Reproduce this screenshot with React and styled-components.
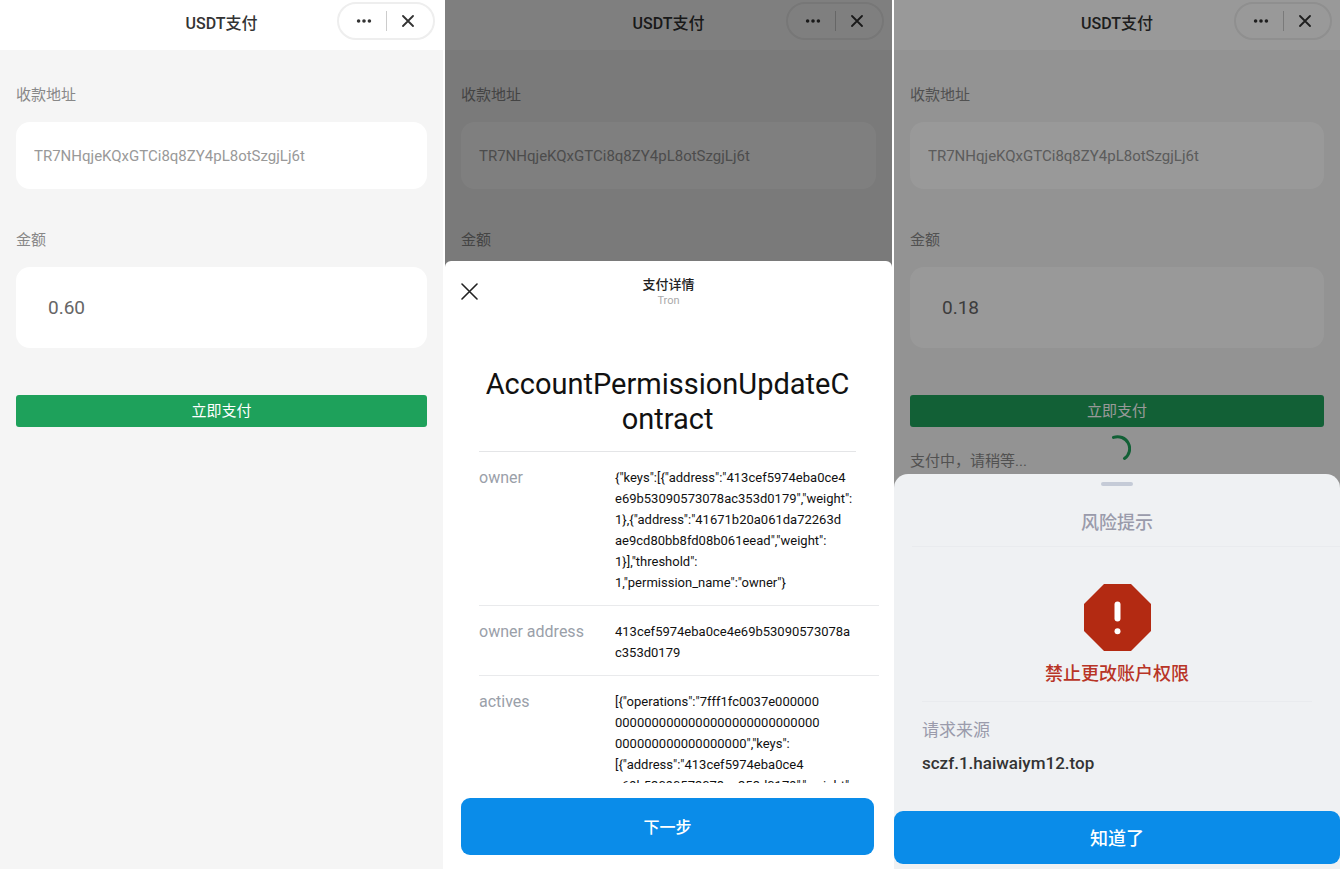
// USDT payment screens
// Pay form on its own, pay form with the contract details sheet, pay form with the risk sheet

import React from 'react';
import styled, { createGlobalStyle } from 'styled-components';

const GlobalStyle = createGlobalStyle`
  * {
    box-sizing: border-box;
  }

  body {
    margin: 0;
    background: #fff;
    font-family: Roboto, 'Noto Sans CJK SC', sans-serif;
  }

  button, input {
    font-family: inherit;
  }
`;

const Screens = styled.div`
  display: grid;
  grid-template-columns: 443fr 447fr 446fr;
  gap: 2px;
  min-height: 100vh;
`;

const Screen = styled.section`
  position: relative;
  overflow: hidden;
  background: #f5f5f5;
`;

const TopBar = styled.header`
  display: grid;
  grid-template-columns: 1fr auto 1fr;
  align-items: center;
  height: 50px;
  padding: 0 8px 2px;
  background: #fff;

  h1 {
    grid-column: 2;
    margin: 0;
    font-size: 16px;
    font-weight: 500;
    line-height: 24px;
    color: #333;
  }
`;

const Capsule = styled.div`
  display: flex;
  justify-self: end;
  align-items: center;
  width: 98px;
  height: 38px;
  margin-bottom: 6px;
  padding: 0 3px;
  border: 2px solid #eee;
  border-radius: 19px;

  button {
    display: flex;
    flex: 1;
    justify-content: center;
    align-items: center;
    height: 20px;
    padding: 0;
    border: 0;
    background: none;
    color: #333;
  }

  button + button {
    border-left: 1px solid #ccc;
  }
`;

const PayForm = styled.form`
  display: flex;
  flex-direction: column;
  padding: 35px 16px 0;
`;

const Field = styled.div`
  display: flex;
  flex-direction: column;
  gap: 17px;
  margin-bottom: ${props => props.$last ? '47px' : '41px'};

  label {
    font-size: 15px;
    line-height: 20px;
    color: #888;
  }

  input {
    width: 100%;
    height: ${props => props.$large ? '81px' : '67px'};
    padding: ${props => props.$large ? '0 32px' : '0 18px'};
    border: 0;
    border-radius: 14px;
    outline: 0;
    background: #fff;
    font-size: ${props => props.$large ? '19px' : '15px'};
    color: ${props => props.$large ? '#666' : '#999'};
  }
`;

const PayButton = styled.button`
  height: 32px;
  padding: 0;
  border: 0;
  border-radius: 3px;
  background: #1ea15b;
  font-size: 15px;
  line-height: 20px;
  color: #fff;
`;

const Status = styled.div`
  display: grid;
  grid-template-columns: 1fr auto 1fr;
  padding-top: 8px;

  p {
    align-self: end;
    margin: 0;
    padding-top: 16px;
    font-size: 15px;
    line-height: 20px;
    color: #888;
  }
`;

const Overlay = styled.div`
  position: absolute;
  inset: 0;
  display: flex;
  flex-direction: column;
  justify-content: flex-end;
  background: rgba(0, 0, 0, ${props => props.$dim});
`;

const DetailSheet = styled.div`
  display: flex;
  flex-direction: column;
  height: 70%;
  padding-bottom: 14px;
  border-radius: 6px 6px 0 0;
  background: #fff;
`;

const SheetHeader = styled.div`
  display: grid;
  grid-template-columns: 1fr auto 1fr;
  align-items: center;
  padding: 15px 16px 0;

  button {
    display: flex;
    justify-self: start;
    padding: 0;
    border: 0;
    background: none;
    color: #222;
  }

  div {
    text-align: center;
  }

  h2 {
    margin: 0;
    font-size: 13px;
    font-weight: 500;
    line-height: 18px;
    color: #222;
  }

  p {
    margin: 0;
    font-size: 11px;
    line-height: 14px;
    color: #aaa;
  }
`;

const SheetBody = styled.div`
  flex: 1;
  min-height: 0;
  overflow: hidden;
  padding: 59px 13px 0 34px;
`;

const ContractName = styled.h3`
  margin: 0 23px 0 0;
  padding-bottom: 14px;
  border-bottom: 1px solid #e4e5e7;
  font-size: 29px;
  font-weight: 400;
  line-height: 35px;
  text-align: center;
  white-space: nowrap;
  color: #111;
`;

const Details = styled.table`
  width: 100%;
  border-collapse: separate;
  border-spacing: 0;

  th, td {
    padding: 15px 0 12px;
    border-bottom: 1px solid #e9eaec;
    font-weight: 400;
    line-height: 21px;
    text-align: left;
    vertical-align: top;
  }

  th {
    width: 136px;
    font-size: 16px;
    color: #9aa0a9;
  }

  td {
    font-size: 13px;
    white-space: pre;
    color: #111;
  }
`;

const BlueButton = styled.button`
  flex-shrink: 0;
  height: ${props => props.$wide ? '53px' : '57px'};
  margin: ${props => props.$wide ? '0' : '15px 18px 0 16px'};
  padding: 0 0 2px;
  border: 0;
  border-radius: 9px;
  background: #0a8ce9;
  font-size: ${props => props.$wide ? '18px' : '16px'};
  font-weight: 500;
  color: #fff;
`;

const RiskSheet = styled.div`
  display: flex;
  flex-direction: column;
  padding: 8px 0 5px;
  border-radius: 14px 14px 0 0;
  background: #eff1f3;
`;

const Handle = styled.span`
  align-self: center;
  width: 32px;
  height: 4px;
  border-radius: 2px;
  background: #c5cbd7;
`;

const RiskTitle = styled.h2`
  margin: 25px 0 0 18px;
  padding: 0 18px 11px 0;
  border-bottom: 1px solid #e9ebee;
  font-size: 18px;
  font-weight: 500;
  line-height: 24px;
  text-align: center;
  color: #9a9bab;
`;

const Warning = styled.div`
  display: flex;
  flex-direction: column;
  align-items: center;
  gap: 11px;
  margin: 0 28px;
  padding: 37px 0 15px;
  border-bottom: 1px solid #e9ebee;

  p {
    margin: 0;
    font-size: 18px;
    font-weight: 500;
    line-height: 24px;
    color: #b83426;
  }
`;

const Source = styled.dl`
  margin: 0 28px 36px;
  padding-top: 16px;
  font-size: 17px;

  dt {
    line-height: 24px;
    color: #9a9bab;
  }

  dd {
    margin: 9px 0 0;
    font-weight: 500;
    line-height: 24px;
    color: #333;
  }
`;

const DotsIcon = () => (
  <svg width='16' height='6' viewBox='0 0 16 6' fill='currentColor'>
    <circle cx='2.6' cy='3' r='1.8' />
    <circle cx='8' cy='3' r='1.8' />
    <circle cx='13.4' cy='3' r='1.8' />
  </svg>
);

const CloseIcon = ({ size, stroke }) => (
  <svg width={size} height={size} viewBox={`0 0 ${size} ${size}`} fill='none' stroke='currentColor' strokeWidth={stroke}>
    <path d={`M1 1L${size - 1} ${size - 1}M${size - 1} 1L1 ${size - 1}`} strokeLinecap='round' />
  </svg>
);

const SpinnerIcon = () => (
  <svg width='28' height='28' viewBox='0 0 28 28' fill='none' stroke='#1ea15b' strokeWidth='3'>
    <path d='M10.5 2.4A12 12 0 0 1 21.5 23.5' strokeLinecap='round' />
  </svg>
);

const StopIcon = () => (
  <svg width='67' height='67' viewBox='0 0 67 67'>
    <path d='M20 0H47L67 20V47L47 67H20L0 47V20Z' fill='#b32a12' />
    <rect x='30.5' y='17.5' width='6' height='20' rx='3' fill='#fff' />
    <circle cx='33.5' cy='47.2' r='3' fill='#fff' />
  </svg>
);

const address = 'TR7NHqjeKQxGTCi8q8ZY4pL8otSzgjLj6t';

const details = [
  {
    name: 'owner',
    value: [
      '{"keys":[{"address":"413cef5974eba0ce4',
      'e69b53090573078ac353d0179","weight":',
      '1},{"address":"41671b20a061da72263d',
      'ae9cd80bb8fd08b061eead","weight":',
      '1}],"threshold":',
      '1,"permission_name":"owner"}'
    ]
  },
  {
    name: 'owner address',
    value: [
      '413cef5974eba0ce4e69b53090573078a',
      'c353d0179'
    ]
  },
  {
    name: 'actives',
    value: [
      '[{"operations":"7fff1fc0037e000000',
      '0000000000000000000000000000',
      '000000000000000000","keys":',
      '[{"address":"413cef5974eba0ce4',
      'e69b53090573078ac353d0179","weight":'
    ]
  }
];

const PayPage = ({ id, amount, paying }) => (
  <>
    <TopBar>
      <h1>USDT支付</h1>
      <Capsule>
        <button type='button' aria-label='更多'><DotsIcon /></button>
        <button type='button' aria-label='关闭'><CloseIcon size={12} stroke={1.8} /></button>
      </Capsule>
    </TopBar>
    <PayForm onSubmit={e => e.preventDefault()}>
      <Field>
        <label htmlFor={`${id}-address`}>收款地址</label>
        <input id={`${id}-address`} type='text' defaultValue={address} readOnly />
      </Field>
      <Field $large $last>
        <label htmlFor={`${id}-amount`}>金额</label>
        <input id={`${id}-amount`} type='text' defaultValue={amount} />
      </Field>
      <PayButton type='submit'>立即支付</PayButton>
      {paying && (
        <Status>
          <p>支付中，请稍等...</p>
          <SpinnerIcon />
        </Status>
      )}
    </PayForm>
  </>
);

const ContractSheet = () => (
  <Overlay $dim={0.5}>
    <DetailSheet>
      <SheetHeader>
        <button type='button' aria-label='关闭'><CloseIcon size={17} stroke={1.6} /></button>
        <div>
          <h2>支付详情</h2>
          <p>Tron</p>
        </div>
      </SheetHeader>
      <SheetBody>
        <ContractName>AccountPermissionUpdateC<br />ontract</ContractName>
        <Details>
          <tbody>
            {details.map(item => (
              <tr key={item.name}>
                <th scope='row'>{item.name}</th>
                <td>{item.value.join('\n')}</td>
              </tr>
            ))}
          </tbody>
        </Details>
      </SheetBody>
      <BlueButton type='button'>下一步</BlueButton>
    </DetailSheet>
  </Overlay>
);

const RiskAlert = () => (
  <Overlay $dim={0.4}>
    <RiskSheet>
      <Handle />
      <RiskTitle>风险提示</RiskTitle>
      <Warning>
        <StopIcon />
        <p>禁止更改账户权限</p>
      </Warning>
      <Source>
        <dt>请求来源</dt>
        <dd>sczf.1.haiwaiym12.top</dd>
      </Source>
      <BlueButton type='button' $wide>知道了</BlueButton>
    </RiskSheet>
  </Overlay>
);

const App = () => (
  <>
    <GlobalStyle />
    <Screens>
      <Screen>
        <PayPage id='form' amount='0.60' />
      </Screen>
      <Screen>
        <PayPage id='contract' amount='0.60' />
        <ContractSheet />
      </Screen>
      <Screen>
        <PayPage id='risk' amount='0.18' paying />
        <RiskAlert />
      </Screen>
    </Screens>
  </>
);

export default App;
